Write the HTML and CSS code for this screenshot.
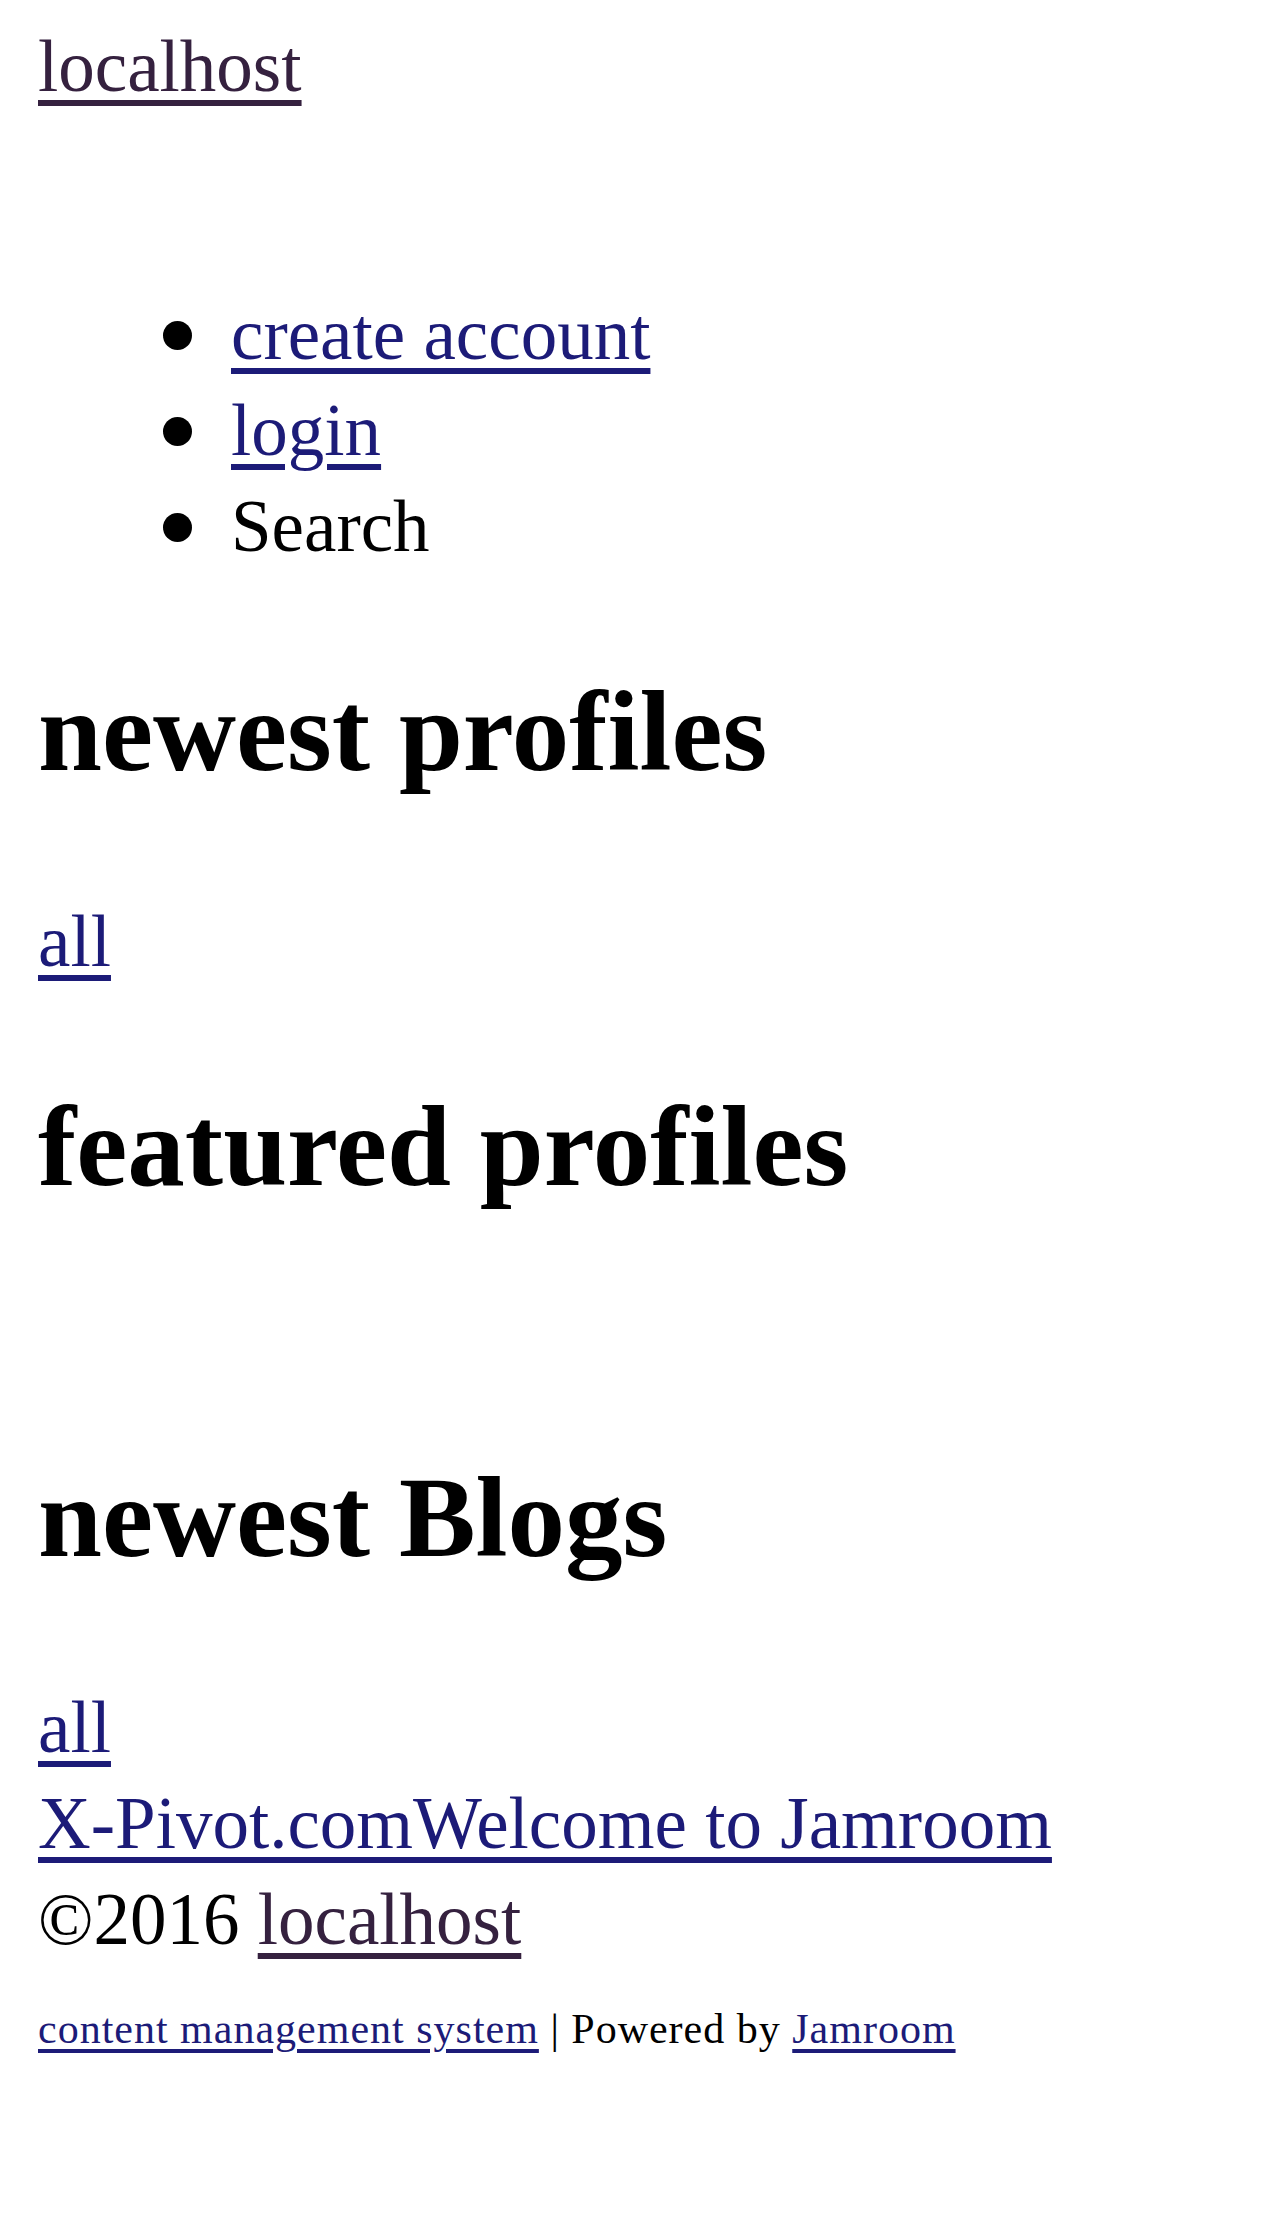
FILE: index.html
```html
<!DOCTYPE html>
<html lang="en">
<head>
    <meta charset="UTF-8">
    <meta name="viewport" content="width=device-width, initial-scale=1.0">
    <title>localhost</title>
    <link rel="stylesheet" href="styles.css">
</head>
<body>
    <div class="site-title"><a href="#" class="visited">localhost</a></div>

    <ul class="menu">
        <li><a href="#">create account</a></li>
        <li><a href="#">login</a></li>
        <li>Search</li>
    </ul>

    <h2>newest profiles</h2>
    <div class="more"><a href="#">all</a></div>

    <h2>featured profiles</h2>
    <div class="featured-list"></div>

    <h2>newest Blogs</h2>
    <div class="more"><a href="#">all</a></div>

    <div class="blog-link"><a href="#">X-Pivot.comWelcome to Jamroom</a></div>
    <div class="copyright">&copy;2016 <a href="#" class="visited">localhost</a></div>
    <div class="powered"><a href="#">content management system</a> | Powered by <a href="#">Jamroom</a></div>
</body>
</html>
```

FILE: styles.css
```css
body {
    background-color: #fff;
    color: #000;
    font-family: "Liberation Serif", "Times New Roman", serif;
    font-size: 73px;
    line-height: 96px;
    margin: 19px 38px;
}
a {
    color: #1c1b78;
    text-decoration: underline;
    text-decoration-thickness: 6px;
    text-underline-offset: 9px;
}
a.visited {
    color: #35213f;
}
.menu {
    margin: 172px 0 90px 0;
    padding-left: 193px;
    list-style: none;
}
.menu li {
    line-height: 96px;
}
.menu li::before {
    content: "";
    display: inline-block;
    width: 29px;
    height: 29px;
    border-radius: 50%;
    background: #000;
    margin: 0 39px 9px -68px;
}
h2 {
    font-size: 115px;
    line-height: 130px;
    font-weight: bold;
    margin: 92px 0 97px 0;
}
.featured-list {
    height: 52px;
}
.powered {
    margin-top: 31px;
    font-size: 42px;
    line-height: 60px;
    letter-spacing: 1px;
}
.powered a {
    text-decoration-thickness: 4px;
    text-underline-offset: 6px;
}
```
